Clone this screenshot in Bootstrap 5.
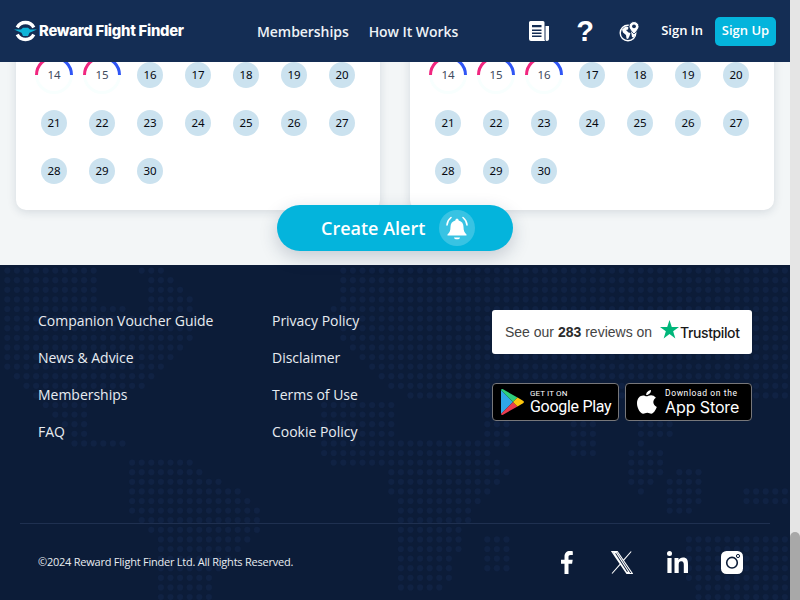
<!DOCTYPE html>
<html lang="en">
<head>
  <meta charset="UTF-8">
  <title>Reward Flight Finder</title>
  <link href="https://cdn.jsdelivr.net/npm/bootstrap@5.3.0/dist/css/bootstrap.min.css" rel="stylesheet">
  <style>
    html, body { height: 600px; overflow: hidden; }
    body { font-family: "Open Sans", sans-serif; background: #f3f6f7; }
    .page-wrap { width: 790px; height: 600px; overflow: hidden; }
    .fake-scroll { width: 10px; height: 600px; background: #e5e5e5; }
    .fake-thumb { height: 68px; background: #a8a8a8; border-radius: 5px 5px 0 0; }

    .top-bar { height: 62px; background: #142d54; position: relative; z-index: 3; padding: 0 14px; white-space: nowrap; }
    .top-bar > * { flex-shrink: 0; }
    .brand-box { width: 243px; gap: 2px; }
    .brand-name { font-family: "Inter", sans-serif; font-weight: 800; font-size: 14.8px; color: #fff; letter-spacing: -.25px; }
    .top-link { font-size: 14px; font-weight: 600; color: #eef2f6; text-decoration: none; letter-spacing: -.06px; }
    .top-link + .top-link { margin-left: 20px; }
    .top-icons { margin-left: 71px; width: 111px; }
    .help-mark { font-family: "Liberation Sans", sans-serif; font-weight: 700; font-size: 29px; line-height: 30px; color: #fff; width: 16px; text-align: center; }
    .sign-in { font-size: 13px; font-weight: 600; color: #fff; text-decoration: none; margin-left: 21px; }
    .sign-up { background: #04b4dc; color: #fff; font-size: 13px; font-weight: 600; width: 61px; height: 29px; border: 0; border-radius: 5px; padding: 0; margin-left: 12px; }

    .cal-area { height: 223px; margin-top: -20px; padding: 0 16px; overflow: visible; position: relative; z-index: 1; }
    .cal-card { width: 364px; height: 168px; border: 0; border-radius: 10px; background: #fff; padding: 9px 14px 15px; box-shadow: 0 2px 10px rgba(30, 50, 80, .14); }
    .cal-grid { display: grid; grid-template-columns: repeat(7, 48px); grid-auto-rows: 48px; }
    .cal-cell { display: flex; align-items: center; justify-content: center; position: relative; font-family: "Noto Sans", sans-serif; font-size: 11.5px; color: #05080f; }
    .day-dot { width: 26px; height: 26px; border-radius: 50%; background: #cbe2ef; display: flex; align-items: center; justify-content: center; }
    .cal-cell.ringed { color: #3f4b60; }
    .ring-svg { position: absolute; left: 4px; top: 4px; width: 40px; height: 40px; }

    .alert-btn { position: relative; z-index: 2; width: 236px; height: 46px; margin: -5px auto 0; padding: 0 0 0 44px; border: 0; border-radius: 23px; background: #04b4dc; color: #fff; font-size: 18px; font-weight: 600; gap: 14px; box-shadow: 0 6px 18px rgba(30, 50, 80, .22); }
    .bell-disc { width: 36px; height: 36px; border-radius: 50%; background: #38c3e3; }

    .site-foot { position: relative; height: 335px; background: #0c1c38; margin-top: 0; overflow: hidden; }
    .dot-map { position: absolute; left: 0; top: 0; width: 790px; height: 335px; }
    .foot-inner { position: relative; }
    .foot-top { height: 258px; padding: 37px 38px 0; }
    .foot-col { width: 234px; }
    .foot-col a { display: block; height: 37px; line-height: 37px; font-size: 14px; font-weight: 500; letter-spacing: -.02px; color: #e8ecf1; text-decoration: none; }
    .foot-side { width: 260px; margin-left: -14px; padding-top: 8px; flex-shrink: 0; white-space: nowrap; }
    .tp-box { height: 44px; border-radius: 3px; background: #fff; font-family: "Liberation Sans", sans-serif; font-size: 14px; color: #444; padding-left: 13px; }
    .tp-box b { color: #2b2b2b; }
    .tp-box svg { margin-top: -6px; }
    .tp-word { font-family: "Inter", sans-serif; font-weight: 500; font-size: 14px; color: #191919; letter-spacing: -.4px; margin-left: 1px; }
    .store-row { margin-top: 29px; gap: 6px; }
    .store-tag { width: 127px; height: 38px; background: #000; border: 1px solid #77777a; border-radius: 4px; color: #fff; gap: 6px; }
    .store-tag.gp { padding-left: 8px; }
    .store-tag.ap { padding-left: 11px; gap: 8px; }
    .store-small { font-size: 8px; line-height: 9px; font-family: "Roboto", sans-serif; letter-spacing: .1px; }
    .store-big { font-size: 16px; line-height: 18px; font-family: "Roboto", sans-serif; letter-spacing: -.3px; }
    .ap .store-small { font-size: 8.5px; letter-spacing: .6px; }
    .ap .store-big { font-family: "Inter", sans-serif; font-size: 16px; letter-spacing: -.1px; }
    .foot-rule { height: 1px; margin: 0 20px; background: #1f3050; }
    .foot-bottom { height: 76px; padding-left: 38px; }
    .copy-line { font-size: 11px; color: #e8ecf1; letter-spacing: -.23px; width: 523px; }
    .social-set { gap: 0; }
    .soc-f { margin-right: 38px; }
    .soc-x { margin-right: 34px; }
    .soc-in { margin-right: 33px; }
  </style>
</head>
<body>
<div class="d-flex">
  <div class="page-wrap">
    <nav class="top-bar d-flex align-items-center">
      <div class="brand-box d-flex align-items-center">
        <svg width="23" height="24" viewBox="0 0 23 24">
          <path d="M3.200 8.500A9.400 9.400 0 0 1 19.800 8.500" fill="none" stroke="#fff" stroke-width="3.400"/>
          <path d="M3.200 15.500A9.400 9.400 0 0 0 19.800 15.500" fill="none" stroke="#fff" stroke-width="3.400"/>
          <path d="M0 10.600h7l2-1.800h5l2 1.800h7l-7.500 3.200-1.500 3.200h-5l-1.500-3.200z" fill="#0fb4d8"/>
        </svg>
        <span class="brand-name">Reward Flight Finder</span>
      </div>
      <a class="top-link" href="#">Memberships</a>
      <a class="top-link" href="#">How It Works</a>
      <div class="top-icons d-flex align-items-center justify-content-between">
        <svg width="20" height="20" viewBox="0 0 20 20">
          <path d="M1.500 0H14a1.500 1.500 0 0 1 1.500 1.500V18a2 2 0 0 0 .4 1.500V20H2a2 2 0 0 1-2-2V1.500A1.500 1.500 0 0 1 1.500 0z" fill="#fff"/>
          <path d="M16.500 5H20v13a2 2 0 0 1-3.500 1.300z" fill="#fff"/>
          <path d="M3 4h9.500v2.300H3zM3 8.400h9.500v1.500H3zM3 11.500h9.500v1.500H3zM3 14.600h9.500v1.500H3z" fill="#142d54"/>
        </svg>
        <span class="help-mark">?</span>
        <svg width="21" height="21" viewBox="0 0 21 21">
          <circle cx="9" cy="12" r="7.800" fill="#142d54" stroke="#fff" stroke-width="1.400"/>
          <path d="M3 8.500l3.500-3 3 .5-.5 2.500-2 .5 2.500 2.500 2 .5-1 3-1.500 3-1.500-.5-.5-3.500-3-2.500zM12 10l4.500-.5.5 3.500-2.500 3.500-1.500-.5-.5-3z" fill="#fff"/>
          <path d="M15 .5a5 5 0 0 1 5 5C20 8.500 15 13 15 13S10 8.500 10 5.500a5 5 0 0 1 5-5z" fill="#fff" stroke="#142d54" stroke-width="1"/>
          <circle cx="15" cy="5.300" r="1.900" fill="#142d54"/>
        </svg>
      </div>
      <a class="sign-in" href="#">Sign In</a>
      <button class="btn sign-up" type="button">Sign Up</button>
    </nav>

    <section class="cal-area">
      <div class="d-flex justify-content-between">
        <div class="card cal-card">
          <div class="cal-grid" id="cal-left"></div>
        </div>
        <div class="card cal-card">
          <div class="cal-grid" id="cal-right"></div>
        </div>
      </div>
      <button class="btn alert-btn d-flex align-items-center" type="button">
        <span>Create Alert</span>
        <span class="bell-disc d-flex align-items-center justify-content-center">
          <svg width="26" height="27" viewBox="0 0 26 27">
            <path d="M13 3.500a2 2 0 0 1 1.700 2c3.300.8 4.800 3.300 4.800 6.500 0 4 1 5.500 3 7.500v1H3.500v-1c2-2 3-3.500 3-7.500 0-3.200 1.500-5.700 4.800-6.500a2 2 0 0 1 1.700-2z" fill="#fff"/>
            <path d="M10 22.500h6a3 1.800 0 0 1-6 0z" fill="#fff"/>
            <path d="M7 2.500A11 11 0 0 0 3 10M19 2.500A11 11 0 0 1 23 10" fill="none" stroke="#fff" stroke-width="1.600" stroke-linecap="round"/>
          </svg>
        </span>
      </button>
    </section>

    <footer class="site-foot">
      <svg class="dot-map" id="dot-map" viewBox="0 0 790 335"></svg>
      <div class="foot-inner">
        <div class="foot-top d-flex">
          <div class="foot-col">
            <a href="#">Companion Voucher Guide</a>
            <a href="#">News &amp; Advice</a>
            <a href="#">Memberships</a>
            <a href="#">FAQ</a>
          </div>
          <div class="foot-col">
            <a href="#">Privacy Policy</a>
            <a href="#">Disclaimer</a>
            <a href="#">Terms of Use</a>
            <a href="#">Cookie Policy</a>
          </div>
          <div class="foot-side">
            <div class="tp-box d-flex align-items-center">
              <span>See our <b>283</b> reviews on</span>
              <svg class="ms-2" width="19" height="19" viewBox="0 0 24 24"><path d="M12 0l2.900 8.900H24l-7.400 5.400 2.800 9L12 17.700l-7.400 5.600 2.800-9L0 8.900h9.100z" fill="#00b67a"/></svg>
              <span class="tp-word">Trustpilot</span>
            </div>
            <div class="store-row d-flex">
              <div class="store-tag gp d-flex align-items-center">
                <svg width="23" height="26" viewBox="0 0 23 26">
                  <path d="M0 1v24l12-12z" fill="#2fa8e8"/>
                  <path d="M0 1l12 12 4.500-4.500L2 .3C1 -.2 .3 .2 0 1z" fill="#2fcf7d"/>
                  <path d="M0 25l12-12 4.500 4.500L2 25.700c-1 .5-1.700.1-2-.7z" fill="#ec3c4e"/>
                  <path d="M16.500 8.500L12 13l4.500 4.500 5.500-3.200c1.200-.7 1.200-1.900 0-2.600z" fill="#fdc60d"/>
                </svg>
                <div>
                  <div class="store-small">GET IT ON</div>
                  <div class="store-big">Google Play</div>
                </div>
              </div>
              <div class="store-tag ap d-flex align-items-center">
                <svg width="20" height="24" viewBox="0 0 20 24">
                  <path d="M14 0c.2 2.700-2.300 5.200-4.800 5C8.900 2.500 11.500.2 14 0z" fill="#fff"/>
                  <path d="M9.600 6.300c1 0 2.500-1.100 4.500-1.100 1.500 0 3.500.7 4.800 2.600-3.800 2.300-3.200 7.500.9 9.100-1 2.700-3.300 6.800-5.500 6.800-1.500 0-2.200-1-4-1-1.900 0-2.700 1-4.100 1C3.500 23.700 0 18.500 0 13.300 0 8.200 3.200 5.500 6.100 5.500c1.500 0 2.700.8 3.500.8z" fill="#fff"/>
                </svg>
                <div>
                  <div class="store-small">Download on the</div>
                  <div class="store-big">App Store</div>
                </div>
              </div>
            </div>
          </div>
        </div>
        <div class="foot-rule"></div>
        <div class="foot-bottom d-flex align-items-center">
          <div class="copy-line">©2024 Reward Flight Finder Ltd. All Rights Reserved.</div>
          <div class="social-set d-flex align-items-center">
            <svg class="soc-f" width="12" height="23" viewBox="0 0 12 23"><path d="M3.500 23V12.800H0V8.700h3.500V5.600C3.500 2 5.600 0 8.800 0c1.400 0 2.600.1 3 .2v3.700H9.600c-1.700 0-2.100.9-2.100 2v2.800h4.200l-.6 4.100H7.500V23z" fill="#fff"/></svg>
            <svg class="soc-x" width="22" height="23" viewBox="0 0 22 23"><path d="M.8.500h5.500l15 22h-5.500zM3 1.600l12.600 19.800h2.600L5.400 1.600zM20.200.5L12.400 9.300M1 22.500l8.500-9.600" fill="none" stroke="#fff" stroke-width="1.100"/></svg>
            <svg class="soc-in" width="21" height="22" viewBox="0 0 21 22"><circle cx="2.500" cy="2.500" r="2.500" fill="#fff"/><path d="M.4 7h4.200v15H.4zM7.500 7h4v2c.8-1.300 2.400-2.400 4.500-2.400 4 0 5 2.600 5 6.400v9h-4.200v-8c0-1.900-.3-3.700-2.500-3.700-2.200 0-2.600 1.700-2.600 3.600v8.100H7.500z" fill="#fff"/></svg>
            <svg width="22" height="23" viewBox="0 0 22 23"><rect width="22" height="23" rx="5.500" fill="#fff"/><circle cx="11" cy="11.700" r="5.300" fill="none" stroke="#0c1c38" stroke-width="1.600"/><circle cx="17" cy="5" r="1.600" fill="none" stroke="#0c1c38" stroke-width="1"/></svg>
          </div>
        </div>
      </div>
    </footer>
  </div>
  <div class="fake-scroll d-flex flex-column justify-content-end"><div class="fake-thumb"></div></div>
</div>

<script src="https://cdn.jsdelivr.net/npm/bootstrap@5.3.0/dist/js/bootstrap.bundle.min.js"></script>
<script>
  // calendar days: the dates with arcs are the selected ones
  function fillCal(id, start, ringedUpTo) {
    const box = document.getElementById(id);
    let html = "";
    for (let d = start; d <= 30; d++) {
      if (d <= ringedUpTo) {
        html += `<div class="cal-cell ringed">
          <svg class="ring-svg" viewBox="0 0 40 40">
            <circle cx="20" cy="20" r="17.500" fill="none" stroke="#f8fffe" stroke-width="3"/>
            <path d="M2.500 20A17.500 17.500 0 0 1 20 2.500" fill="none" stroke="#f1267f" stroke-width="3"/>
            <path d="M20 2.500A17.500 17.500 0 0 1 37.500 20" fill="none" stroke="#2f55f5" stroke-width="3"/>
          </svg>${d}</div>`;
      } else {
        html += `<div class="cal-cell"><span class="day-dot">${d}</span></div>`;
      }
    }
    box.innerHTML = html;
  }
  fillCal("cal-left", 14, 15);
  fillCal("cal-right", 14, 16);

  // world map made of dots, land shapes in page coordinates
  const land = [
    [[0,268],[95,268],[100,300],[150,320],[200,330],[170,360],[145,385],[125,400],[88,400],[88,438],[127,438],[127,448],[75,448],[45,405],[15,380],[0,370]],
    [[140,268],[165,268],[180,285],[195,300],[190,312],[150,310],[145,285]],
    [[122,457],[195,457],[195,470],[225,480],[260,505],[262,525],[250,545],[220,570],[210,600],[158,600],[158,540],[130,515],[130,495]],
    [[340,268],[790,268],[790,400],[700,400],[680,395],[670,440],[640,445],[625,405],[600,400],[600,460],[570,460],[565,400],[515,400],[510,445],[480,445],[480,405],[400,395],[345,345],[330,320]],
    [[315,400],[400,400],[400,470],[330,472],[315,440]],
    [[385,440],[480,440],[510,470],[470,520],[445,590],[400,590],[400,520],[385,480]],
    [[485,530],[510,530],[510,570],[485,570]],
    [[625,445],[665,445],[660,475],[640,500],[630,480]],
    [[670,470],[700,470],[700,510],[665,515]],
    [[745,490],[790,490],[790,510],[745,510]],
    [[683,535],[790,535],[790,600],[700,600],[683,570]]
  ];
  function inside(x, y, poly) {
    let hit = false;
    for (let i = 0, j = poly.length - 1; i < poly.length; j = i++) {
      const [xi, yi] = poly[i], [xj, yj] = poly[j];
      if ((yi > y) !== (yj > y) && x < (xj - xi) * (y - yi) / (yj - yi) + xi) hit = !hit;
    }
    return hit;
  }
  let dots = "";
  for (let fy = 5.6; fy < 335; fy += 9.6) {
    for (let x = 7.3; x < 790; x += 9.6) {
      const y = fy + 265;
      if (land.some(p => inside(x, y, p))) dots += `<circle cx="${x.toFixed(1)}" cy="${fy.toFixed(1)}" r="3.100"/>`;
    }
  }
  const map = document.getElementById("dot-map");
  map.setAttribute("fill", "#102243");
  map.innerHTML = dots;
</script>
</body>
</html>
